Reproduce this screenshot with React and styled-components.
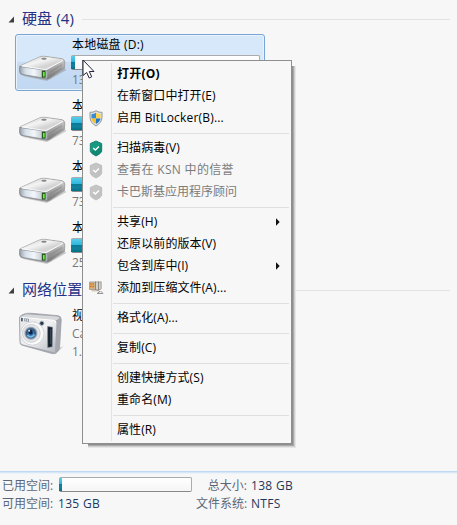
import React from "react";
import styled, { createGlobalStyle, css } from "styled-components";

const GlobalStyle = createGlobalStyle`
  * { box-sizing: border-box; }
  html, body { margin: 0; background: #f7f7f7; overflow: hidden; }
  body { font: 12px/18px "Open Sans", "Noto Sans CJK SC", sans-serif; color: #000; }
  svg { display: block; flex: none; }
`;

const Window = styled.div`
  position: relative;
  display: flex;
  flex-direction: column;
  width: 457px;
  height: 525px;
  overflow: hidden;
  background: #f7f7f7;
  white-space: nowrap;
`;

const Explorer = styled.main`
  flex: 1;
  padding: 8px 7px 0 8px;
`;

const GroupHeader = styled.header`
  display: flex;
  align-items: center;
  height: 22px;
  gap: 8px;
  color: #1e3287;
`;

const GroupTitle = styled.span`
  padding-bottom: 2px;
  font-size: 15px;
  line-height: 20px;
  letter-spacing: 0.1px;
`;

const GroupRule = styled.span`
  flex: 1;
  height: 1px;
  background: #e2e2e2;
`;

const Tiles = styled.section`
  display: flex;
  flex-direction: column;
  gap: 4px;
  padding: 4px 0 0 7px;
  margin-bottom: ${(p) => p.$after || "0"};
`;

const Tile = styled.article`
  display: flex;
  width: 250px;
  height: 57px;
  padding: 1px 4px 0 2px;
  border: 1px solid transparent;
  border-radius: 3px;
  ${(p) => p.$selected && css`
    border-color: #78a5d3;
    background: linear-gradient(#d7e8fa 0 48%, #c8dcf4 49%, #c1d8f2);
    box-shadow: inset 0 0 0 1px #e8f3fd;
  `}
`;

const TileIcon = styled.div`
  width: 54px;
  padding-top: ${(p) => p.$top};
`;

const TileBody = styled.div`
  flex: 1;
  min-width: 0;
`;

const TileName = styled.div`
  height: 18px;
  line-height: 18px;
  letter-spacing: 0.2px;
`;

const TileNote = styled.div`
  height: 18px;
  color: #777;
`;

const Meter = styled.div`
  width: ${(p) => p.$width};
  height: 15px;
  margin: ${(p) => p.$margin || "0"};
  border: 1px solid #ababab;
  border-bottom-color: #888;
  border-radius: 2px;
  background: linear-gradient(#fff, #f5f5f5);
`;

const MeterFill = styled.div`
  height: 13px;
  margin-left: -1px;
  background: linear-gradient(#59ccea 0, #31b8de 43%, #087895 46%, #12829c 75%, #006f86);
`;

const Menu = styled.nav`
  position: absolute;
  top: 60px;
  left: 82px;
  width: 210px;
  height: 384px;
  padding: 2px;
  border: 1px solid #8d8f8f;
  background: linear-gradient(90deg, #f7f7f7 28px, #e2e3e3 28px 29px, #f7f7f7 29px) 0 2px / 100% calc(100% - 4px) no-repeat #f7f7f7;
  box-shadow: 1px 1px 0 #8f8f8f, 2px 2px 0 #a9a9a9, 3px 3px 0 #cfcfcf, 4px 4px 0 #e6e6e6;
  clip-path: polygon(0 0, 100% 0, 100% 6px, calc(100% + 5px) 6px, calc(100% + 5px) calc(100% + 5px), 6px calc(100% + 5px), 6px 100%, 0 100%);
`;

const MenuItem = styled.div`
  display: grid;
  grid-template-columns: 32px 1fr 14px;
  align-items: center;
  height: 22px;
  line-height: 22px;
  color: ${(p) => (p.$disabled ? "#7b7b7b" : "#000")};
  font-weight: ${(p) => (p.$bold ? 700 : 400)};
  letter-spacing: ${(p) => p.$spacing || "0.1px"};
`;

const MenuIcon = styled.span`
  display: flex;
  padding-left: 3px;
`;

const Separator = styled.div`
  height: 1px;
  margin: 4px 0 3px 28px;
  background: #e0e0e0;
`;

const Cursor = styled.svg`
  position: absolute;
  left: 82px;
  top: 59px;
`;

const Details = styled.footer`
  display: grid;
  grid-template-columns: 53px 133px 51px 1fr;
  grid-template-rows: 18px 18px;
  column-gap: 4px;
  height: 54px;
  padding: 5px 0 0 2px;
  border-top: 1px solid #bddaf2;
  box-shadow: inset 0 1px #d7e7f6, inset 0 2px #ebf2fa;
  color: #1e395b;
`;

const Label = styled.span`
  color: #5a6779;
  text-align: ${(p) => p.$align || "left"};
  letter-spacing: 0;
`;

const Value = styled.span`
  letter-spacing: 0.3px;
  margin-left: ${(p) => p.$shift || "0"};
`;

function Triangle() {
  return (
    <svg width="6" height="7" viewBox="0 0 6 7">
      <path d="M6 .5V6.5H.5Z" fill="#3f3f3f" />
    </svg>
  );
}

function Drive() {
  return (
    <svg width="50" height="29" viewBox="0 0 50 29">
      <defs>
        <linearGradient id="driveTop" x1="0" y1="0" x2="1" y2="1">
          <stop stopColor="#c2c2c2" /><stop offset=".4" stopColor="#f4f4f4" /><stop offset=".65" stopColor="#d2d2d2" /><stop offset="1" stopColor="#eee" />
        </linearGradient>
        <linearGradient id="driveFront">
          <stop stopColor="#9ba2aa" /><stop offset=".2" stopColor="#d6dfe8" /><stop offset=".5" stopColor="#f2f7fb" /><stop offset="1" stopColor="#a5adb5" />
        </linearGradient>
        <linearGradient id="driveSide" x1="0" y1="0" x2="0" y2="1">
          <stop stopColor="#dedede" /><stop offset=".45" stopColor="#aaa" /><stop offset="1" stopColor="#777" />
        </linearGradient>
      </defs>
      <path d="M5 22L29 27L48.5 16L46 14L30 23Z" fill="#777" opacity=".35" />
      <path d="M1.8 12L21 3.2Q23.5 2 26.5 2.3L44 4.7Q46.6 5.5 46.8 8L46.4 14.5L32 24.3Q30 25.6 27 25L4 20.8Q1.7 20 1.6 17.5Z" fill="url(#driveSide)" stroke="#999" strokeWidth=".8" />
      <path d="M2 12L21 3.5Q24 2.5 26 2.8L44 5.2Q46 6 44.8 6.7L28 16Z" fill="url(#driveTop)" />
      <path d="M2 12.5L28 16.3Q30.3 16.8 30 19L29 24.7L5 20.5Q1.9 19.8 1.8 17Z" fill="url(#driveFront)" stroke="#858c94" strokeWidth=".7" />
      <path d="M4 12L28 15.8L45 6.3" fill="none" stroke="#fff" opacity=".9" />
      <path d="M32 17L44 9.8V11.5L32 19M32 20.7L44 13.5V15L32 22.7Z" fill="#777" opacity=".35" />
      <ellipse cx="26" cy="4.8" rx="2.7" ry="1" fill="#858585" />
      <rect x="23.8" y="16.6" width="3.7" height="7" fill="#214f17" />
      <path d="M24.9 17.7l1.8.2v4.7l-1.8-.2Z" fill="#69ef35" />
    </svg>
  );
}

function Camera() {
  return (
    <svg width="51" height="46" viewBox="0 0 51 46">
      <defs>
        <linearGradient id="cameraFace" x1="0" y1="0" x2="1" y2="1">
          <stop stopColor="#e7e7e9" /><stop offset=".5" stopColor="#eff0f2" /><stop offset="1" stopColor="#b2b7be" />
        </linearGradient>
        <radialGradient id="cameraLens">
          <stop stopColor="#122c50" /><stop offset=".36" stopColor="#397bb5" /><stop offset=".66" stopColor="#315477" /><stop offset=".85" stopColor="#8e9baa" /><stop offset="1" stopColor="#bdc4cc" />
        </radialGradient>
      </defs>
      <path d="M22 38L44 35L47 32.5L38 42Z" fill="#777" opacity=".3" />
      <path d="M1.5 5Q2 3.5 7 1.8Q9 1 13 1.3L40 3.7Q43.5 4.2 43.2 8L41.5 36.5Q41 38.5 37.5 41.2Q36 42 33 41.3L3.5 33Q2 32.2 1.9 29.5Z" fill="#a5a9af" stroke="#9b9ea4" strokeWidth=".8" />
      <path d="M2 5L8 2.3L39 4.5L42 6L37 9Z" fill="#d7d8da" />
      <path d="M2 5.2L35.5 8.2Q38.5 8.6 38.4 11.5L37 40.6L4 32.3Q2.6 31.8 2.5 29.5Z" fill="url(#cameraFace)" />
      <path d="M3 5.3L35.5 8.3Q38 8.6 38 11" fill="none" stroke="#fff" />
      <circle cx="14.3" cy="21.5" r="11.7" fill="#fafafa" stroke="#c9ccd0" strokeWidth=".8" />
      <circle cx="13.3" cy="21.3" r="8.9" fill="#e5e7ea" stroke="#bbc0c6" strokeWidth=".7" />
      <circle cx="12.9" cy="21.2" r="6.7" fill="url(#cameraLens)" />
      <path d="M9.5 23Q13 27 16.5 22.5" fill="none" stroke="#73beec" strokeWidth="1.8" />
      <circle cx="12.5" cy="20" r="2.2" fill="#132440" />
      <circle cx="11.1" cy="18.7" r="1" fill="#d9efff" />
      <rect x="3" y="5.8" width="1.8" height="3.5" fill="#525b6b" />
      <path d="M6 6.3l5 .4v3L6 9.3Z" fill="#949aa4" />
      <path d="M7.3 7v1.8M9.5 7.2v1.9" stroke="#fff" strokeWidth=".7" />
      <circle cx="23.8" cy="11.3" r="2.1" fill="#263650" stroke="#aeb3bc" strokeWidth=".8" />
      <path d="M29.6 14.5L34.5 15.2L34.2 34.8L29.7 35.5Z" fill="#17202d" stroke="#7b8491" strokeWidth=".6" />
      <path d="M32.8 17v15" stroke="#425060" />
    </svg>
  );
}

function UacShield() {
  return (
    <svg width="16" height="17" viewBox="0 0 16 17">
      <path d="M8 .8Q11 2.7 14 2.3V7.5Q13.7 12.8 8 16Q2.3 12.8 2 7.5V2.3Q5 2.7 8 .8Z" fill="#dde1e3" stroke="#92979b" />
      <path d="M8 2.8V8.5H3.5V4.3Q6 4.2 8 2.8Z" fill="#328bd7" />
      <path d="M8 2.8Q10 4.2 12.5 4.3V8.5H8Z" fill="#ffd34a" />
      <path d="M3.5 8.5H8V14Q3.9 11.6 3.5 8.5Z" fill="#f5bf26" />
      <path d="M8 8.5H12.5Q12.1 11.6 8 14Z" fill="#2177c7" />
    </svg>
  );
}

function KasperskyShield({ disabled }) {
  return (
    <svg width="16" height="17" viewBox="0 0 16 17">
      <path d="M8 1L13.7 3.5V11.3Q12.8 13.9 8 16Q3.2 13.9 2.3 11.3V3.5Z" fill={disabled ? "#c5c5c5" : "#159b82"} stroke={disabled ? "#b9b9b9" : "#087563"} strokeWidth=".8" />
      <path d="M13.5 4V11.3Q12.6 13.8 8 15.7L3 12.3Z" fill={disabled ? "#bdbdbd" : "#08745f"} opacity=".45" />
      <path d="M5.2 8L7.4 10.1L11 6.4" fill="none" stroke="#fff" strokeWidth="1.4" />
    </svg>
  );
}

function ArchiveIcon() {
  return (
    <svg width="16" height="16" viewBox="0 0 16 16">
      <path d="M1.5 2H12.5V9.5H1.5Z" fill="#c1bcb5" stroke="#a5a19c" />
      <path d="M1.5 3H6.5V8.5H1.5Z" fill="#e0a55f" />
      <path d="M2 4H3.5M4.5 4H6M2 6.5H3.5M4.5 6.5H6" stroke="#bd7428" />
      <path d="M7.5 1.5V11M10.5 1.5V10.5M13 1.5V9" stroke="#8b8884" />
      <path d="M9 2.5v7M12 2.5v6.5" stroke="#e8e6e2" />
      <path d="M3.5 10H9V11.5H3.5Z" fill="#d7c6b1" />
      <path d="M8.5 10L12 11.5L9 13.5H15L12.5 11" stroke="#969696" fill="none" />
    </svg>
  );
}

function Arrow() {
  return (
    <svg width="5" height="8" viewBox="0 0 5 8">
      <path d="M1 .3L4.7 4L1 7.7Z" fill="#111" />
    </svg>
  );
}

const icons = {
  uac: <UacShield />,
  virus: <KasperskyShield />,
  disabled: <KasperskyShield disabled />,
  archive: <ArchiveIcon />,
};

const groups = [
  [
    { label: "打开(O)", bold: true, spacing: "0.2px" },
    { label: "在新窗口中打开(E)" },
    { label: "启用 BitLocker(B)...", icon: "uac", spacing: "0.18px" },
  ],
  [
    { label: "扫描病毒(V)", icon: "virus" },
    { label: "查看在 KSN 中的信誉", icon: "disabled", disabled: true, spacing: "0.3px" },
    { label: "卡巴斯基应用程序顾问", icon: "disabled", disabled: true, spacing: "0" },
  ],
  [
    { label: "共享(H)", arrow: true },
    { label: "还原以前的版本(V)" },
    { label: "包含到库中(I)", arrow: true },
    { label: "添加到压缩文件(A)...", icon: "archive" },
  ],
  [{ label: "格式化(A)..." }],
  [{ label: "复制(C)" }],
  [{ label: "创建快捷方式(S)" }, { label: "重命名(M)" }],
  [{ label: "属性(R)" }],
];

const drives = [
  { name: "本地磁盘 (D:)", note: "135 GB", used: 2, selected: true },
  { name: "本", note: "73", used: 65 },
  { name: "本", note: "73", used: 65 },
  { name: "本", note: "25", used: 72 },
];

export default function App() {
  return (
    <Window>
      <GlobalStyle />
      <Explorer>
        <GroupHeader>
          <Triangle /><GroupTitle>硬盘 (4)</GroupTitle><GroupRule />
        </GroupHeader>
        <Tiles $after="5px">
          {drives.map((drive, index) => (
            <Tile key={index} $selected={drive.selected}>
              <TileIcon $top="18px"><Drive /></TileIcon>
              <TileBody>
                <TileName>{drive.name}</TileName>
                <Meter $width="189px" $margin="1px 0 1px -1px">
                  <MeterFill style={{ width: `${drive.used}%` }} />
                </Meter>
                <TileNote>{drive.note}</TileNote>
              </TileBody>
            </Tile>
          ))}
        </Tiles>
        <GroupHeader>
          <Triangle /><GroupTitle>网络位置</GroupTitle><GroupRule />
        </GroupHeader>
        <Tiles>
          <Tile>
            <TileIcon $top="5px"><Camera /></TileIcon>
            <TileBody>
              <TileName>视</TileName>
              <TileNote>Ca</TileNote>
              <TileNote>1.</TileNote>
            </TileBody>
          </Tile>
        </Tiles>
      </Explorer>

      <Details>
        <Label>已用空间:</Label>
        <Meter $width="133px"><MeterFill style={{ width: "2.5%" }} /></Meter>
        <Label $align="right">总大小:</Label>
        <Value>138 GB</Value>
        <Label>可用空间:</Label>
        <Value $shift="-1px">135 GB</Value>
        <Label $align="right">文件系统:</Label>
        <Value>NTFS</Value>
      </Details>

      <Menu>
        {groups.map((group, index) => (
          <React.Fragment key={index}>
            {index > 0 && <Separator />}
            {group.map((item) => (
              <MenuItem key={item.label} $bold={item.bold} $disabled={item.disabled} $spacing={item.spacing}>
                <MenuIcon>{icons[item.icon]}</MenuIcon>
                <span>{item.label}</span>
                {item.arrow && <Arrow />}
              </MenuItem>
            ))}
          </React.Fragment>
        ))}
      </Menu>

      <Cursor width="14" height="22" viewBox="0 0 14 22">
        <path d="M1 1V16.5L4.7 13.5L7.2 19L9.7 17.8L7.3 12.5H12Z" fill="#fff" stroke="#26263a" />
      </Cursor>
    </Window>
  );
}
